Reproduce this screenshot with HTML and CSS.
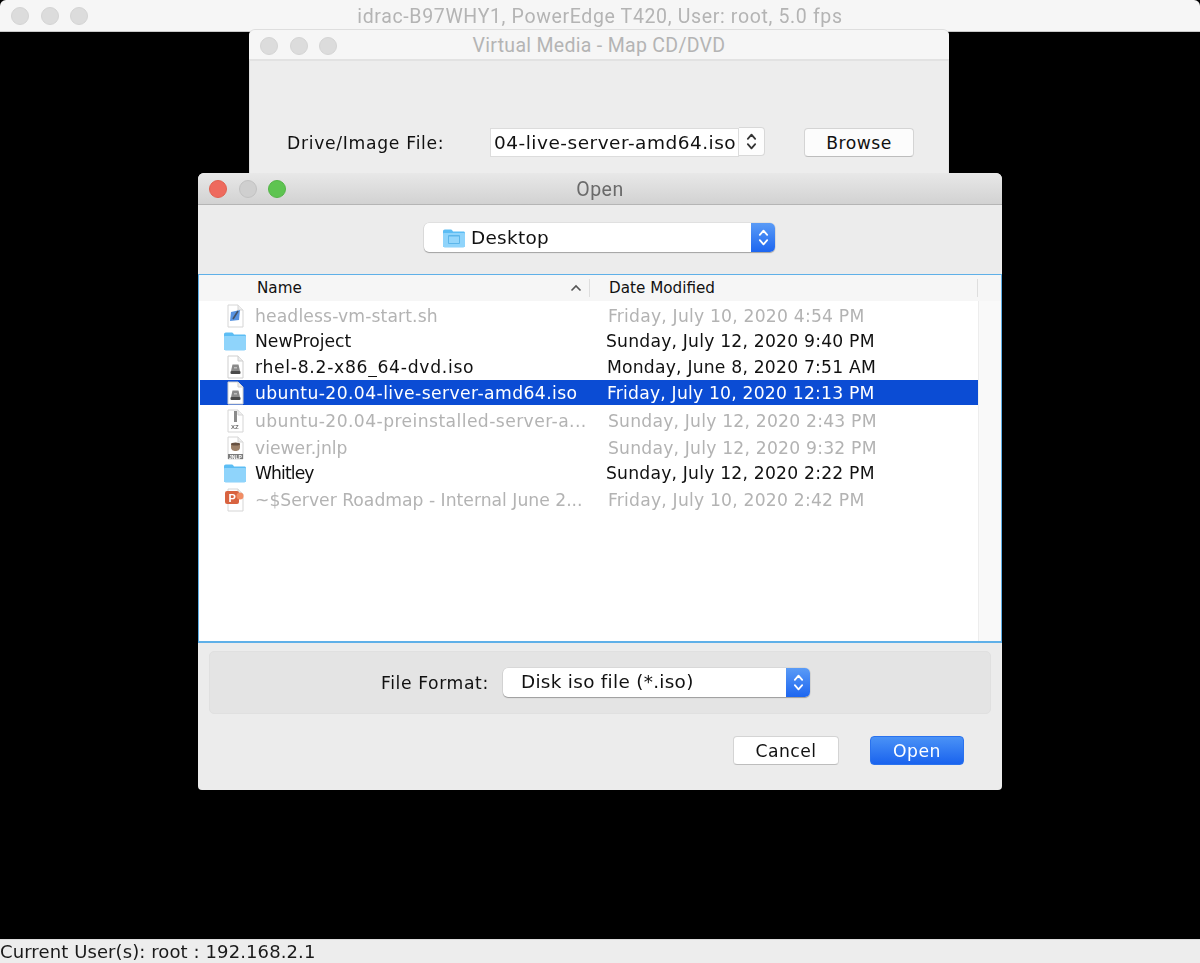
FILE: index.html
```html
<!DOCTYPE html>
<html lang="en">
<head>
<meta charset="utf-8">
<title>idrac-B97WHY1</title>
<link rel="stylesheet" href="styles.css">
</head>
<body>
<svg class="defs" width="0" height="0" aria-hidden="true">
  <defs>
    <symbol id="folder" viewBox="0 0 24 20">
      <path d="M1 3.5C1 2.4 1.7 1.5 2.8 1.5H8.6C9.4 1.5 9.9 2 10.4 2.6L11 3.4H21.4C22.4 3.4 23 4.1 23 5V17.6C23 18.6 22.4 19.3 21.4 19.3H2.6C1.6 19.3 1 18.6 1 17.6Z" fill="#5cbdf4"/>
      <path d="M1 6.2C1 5.5 1.5 5 2.2 5H21.8C22.5 5 23 5.5 23 6.2V17.6C23 18.6 22.4 19.3 21.4 19.3H2.6C1.6 19.3 1 18.6 1 17.6Z" fill="#8fd4fb"/>
    </symbol>
    <symbol id="page" viewBox="0 0 18 24">
      <path d="M2 1H12L17 6V23H2Z" fill="#fff" stroke="#cfcfcf"/>
      <path d="M12 1V6H17" fill="#ececec" stroke="#cfcfcf"/>
    </symbol>
    <symbol id="updown" viewBox="0 0 12 20">
      <path d="M2.5 7.5L6 3.5L9.500 7.5M2.500 12.500L6 16.500L9.500 12.500" fill="none" stroke="currentColor" stroke-width="1.700" stroke-linecap="round" stroke-linejoin="round"/>
    </symbol>
    <symbol id="disc" viewBox="0 0 18 24">
      <path d="M2 1H12L17 6V23H2Z" fill="#fff" stroke="#cfcfcf"/>
      <path d="M12 1V6H17" fill="#ececec" stroke="#cfcfcf"/>
      <path d="M6.500 9.500H12.500L14 16H5Z" fill="#8a8a8a"/>
      <rect x="4.500" y="16" width="10" height="3" rx="1" fill="#4a4a4a"/>
      <rect x="8" y="12" width="3" height="1.500" fill="#bdbdbd"/>
    </symbol>
  </defs>
</svg>

<main class="desktop">
  <section class="main-window">
    <header class="main-title">
      <span class="lights"><i class="light"></i><i class="light"></i><i class="light"></i></span>
      <h1 class="title-text title-pale title-wide">idrac-B97WHY1, PowerEdge T420, User: root, 5.0 fps</h1>
    </header>
    <div class="console"></div>
    <footer class="status">Current User(s): root : 192.168.2.1</footer>
  </section>

  <section class="vm-window">
    <header class="vm-title">
      <span class="lights"><i class="light"></i><i class="light"></i><i class="light"></i></span>
      <h2 class="title-text title-pale title-tight">Virtual Media - Map CD/DVD</h2>
    </header>
    <div class="vm-body">
      <label class="vm-label">Drive/Image File:</label>
      <div class="combo">
        <span class="combo-field">04-live-server-amd64.iso</span>
        <span class="combo-step"><svg class="updown"><use href="#updown"/></svg></span>
      </div>
      <button class="btn btn-browse">Browse</button>
    </div>
  </section>

  <section class="dialog">
    <header class="dialog-title">
      <span class="lights"><i class="light red"></i><i class="light grey"></i><i class="light green"></i></span>
      <h2 class="title-text title-dark">Open</h2>
    </header>
    <div class="location-row">
      <div class="popup popup-location">
        <svg class="loc-icon" viewBox="0 0 24 20">
          <use href="#folder"/>
          <rect x="6" y="7" width="12" height="9" rx="1" fill="#5cb6ea"/>
          <rect x="7" y="8.500" width="10" height="6.500" fill="#94d6fb"/>
        </svg>
        <span class="popup-text">Desktop</span>
        <span class="popup-step"><svg class="updown"><use href="#updown"/></svg></span>
      </div>
    </div>

    <div class="browser">
      <div class="list-head">
        <span class="col-name">Name</span>
        <svg class="sort" viewBox="0 0 12 8"><path d="M1.500 6.500L6 2L10.500 6.500" fill="none" stroke="#555" stroke-width="1.600"/></svg>
        <span class="col-date">Date Modified</span>
      </div>
      <div class="list-body">
        <ul class="rows">
          <li class="row off">
            <svg class="icon"><use href="#page"/><path d="M5 8L14 6L13 16L4 17Z" fill="#3a80dc"/><path d="M7 15L12 7" stroke="#24344e" stroke-width="1.600"/></svg>
            <span class="name ls-s">headless-vm-start.sh</span><span class="date">Friday, July 10, 2020 4:54 PM</span>
          </li>
          <li class="row dir">
            <svg class="icon icon-folder"><use href="#folder"/></svg>
            <span class="name name-dir">NewProject</span><span class="date date-on">Sunday, July 12, 2020 9:40 PM</span>
          </li>
          <li class="row high">
            <svg class="icon"><use href="#disc"/></svg>
            <span class="name ls-l">rhel-8.2-x86_64-dvd.iso</span><span class="date date-on">Monday, June 8, 2020 7:51 AM</span>
          </li>
          <li class="row selected">
            <svg class="icon"><use href="#disc"/></svg>
            <span class="name ls-m">ubuntu-20.04-live-server-amd64.iso</span><span class="date date-on">Friday, July 10, 2020 12:13 PM</span>
          </li>
          <li class="row off">
            <svg class="icon"><use href="#page"/><rect x="8" y="2" width="3" height="11" fill="#777"/><text class="badge" x="5" y="20">XZ</text></svg>
            <span class="name ls-m">ubuntu-20.04-preinstalled-server-a...</span><span class="date">Sunday, July 12, 2020 2:43 PM</span>
          </li>
          <li class="row off">
            <svg class="icon"><use href="#page"/><path d="M5 8H14V11C14 14 12 15 9.500 15S5 14 5 11Z" fill="#8d6c50"/><ellipse cx="9.500" cy="8" rx="4.500" ry="1.500" fill="#4d3320"/><rect x="2" y="18" width="15" height="5" fill="#666"/><text class="badge badge-light" x="3" y="22.500">JNLP</text></svg>
            <span class="name">viewer.jnlp</span><span class="date">Sunday, July 12, 2020 9:32 PM</span>
          </li>
          <li class="row dir">
            <svg class="icon icon-folder"><use href="#folder"/></svg>
            <span class="name name-dir ls-n">Whitley</span><span class="date date-on">Sunday, July 12, 2020 2:22 PM</span>
          </li>
          <li class="row off">
            <svg class="icon"><use href="#page"/><rect x="-1" y="3" width="14" height="13" rx="2" fill="#d2481f"/><circle cx="14" cy="8" r="3.500" fill="#ef7a4a"/><text class="badge badge-p" x="2.500" y="14">P</text></svg>
            <span class="name">~$Server Roadmap - Internal June 2...</span><span class="date">Friday, July 10, 2020 2:42 PM</span>
          </li>
        </ul>
        <div class="scroll-strip"></div>
      </div>
    </div>

    <div class="format-panel">
      <label class="format-label">File Format:</label>
      <div class="popup popup-format">
        <span class="popup-text">Disk iso file (*.iso)</span>
        <span class="popup-step"><svg class="updown"><use href="#updown"/></svg></span>
      </div>
    </div>

    <div class="actions">
      <button class="btn btn-cancel">Cancel</button>
      <button class="btn btn-open">Open</button>
    </div>
  </section>
</main>
</body>
</html>
```

FILE: styles.css
```css
* { box-sizing: border-box; }
html, body { margin: 0; padding: 0; height: 963px; overflow: hidden; background: #000; }
body { font-family: "DejaVu Sans", "Liberation Sans", sans-serif; color: #111; }
.defs { position: absolute; }
.desktop { position: relative; width: 1200px; height: 963px; overflow: hidden; filter: blur(.3px); }

h1, h2 { margin: 0; font-weight: 400; }
ul { list-style: none; margin: 0; padding: 0; }
button { font: inherit; color: inherit; margin: 0; }

.main-window { display: flex; flex-direction: column; height: 963px; }
.main-title { height: 32px; flex: none; display: flex; align-items: center; position: relative; background: #f6f6f6; border-bottom: 1px solid #c9c9c9; border-radius: 6px 6px 0 0; }
.console { flex: 1; background: #000; }
.status { height: 24px; flex: none; background: #ededed; border-top: 1px solid #dcdcdc; font-size: 18px; letter-spacing: .1px; line-height: 24px; white-space: nowrap; color: #1a1a1a; }

.lights { display: flex; gap: 11.500px; position: absolute; left: 11px; top: 7px; }
.light { width: 18px; height: 18px; border-radius: 50%; background: #dcdcdc; border: 1px solid #d4d4d4; display: block; }
.light.red { background: #ee6a5e; border-color: #e2604f; }
.light.grey { background: #cfcfcf; border-color: #c2c2c2; }
.light.green { background: #5ec451; border-color: #54b548; }

.title-text { width: 100%; text-align: center; font-family: "Roboto", "Liberation Sans", sans-serif; font-size: 19.500px; letter-spacing: .45px; padding-top: 1px; }
.title-pale { color: #b4b4b4; }
.title-dark { color: #6a6a6a; }
.title-wide { letter-spacing: .65px; }
.title-tight { letter-spacing: .3px; }

.vm-window { position: absolute; left: 249px; top: 29px; width: 700px; height: 150px; background: #ededed; border-radius: 6px 6px 0 0; border: 1px solid #dedede; border-bottom: 0; border-right-color: #e4e4e4; }
.vm-title { position: relative; height: 31px; margin: 0 -1px; display: flex; align-items: center; background: #f6f6f6; border-bottom: 2px solid #e2e2e2; border-radius: 6px 6px 0 0; }
.vm-body { position: relative; display: flex; align-items: flex-start; padding: 67px 0 0 37px; font-size: 17.200px; }
.vm-label { width: 203px; line-height: 30px; letter-spacing: .7px; }
.combo { display: flex; width: 275px; height: 29px; }
.combo-field { width: 249px; height: 29px; background: #fff; border: 1px solid #dcdcdc; font-size: 18.500px; letter-spacing: .5px; line-height: 28px; padding-left: 3px; white-space: nowrap; overflow: hidden; }
.combo-step { width: 26px; height: 29px; background: #fdfdfd; border: 1px solid #d8d8d8; border-left: 0; border-radius: 0 4px 4px 0; display: flex; align-items: center; justify-content: center; color: #333; margin-top: -1px; }
.updown { width: 13px; height: 21px; display: block; }

.btn { height: 29px; background: #fff; border: 1px solid #d4d4d4; border-bottom-color: #bdbdbd; border-radius: 4px; font-size: 17.200px; letter-spacing: .5px; line-height: 26px; padding: 0; }
.btn-browse { width: 110px; margin-left: 39px; background: #fcfcfc; }

.dialog { position: absolute; left: 198px; top: 173px; width: 804px; height: 617px; background: #ececec; border-radius: 6px 6px 4px 4px; display: flex; flex-direction: column; }
.dialog-title { position: relative; height: 32px; flex: none; display: flex; align-items: center; background: linear-gradient(#e8e8e8, #d2d2d2); border-bottom: 1px solid #b5b5b5; border-radius: 6px 6px 0 0; }
.location-row { height: 69px; flex: none; padding: 18px 0 0 226px; }

.popup { display: flex; align-items: center; background: #fff; border-radius: 5px; box-shadow: 0 1px 1px rgba(0,0,0,.28), 0 0 0 .5px rgba(0,0,0,.1); height: 29px; position: relative; font-size: 18.400px; }
.popup-location { width: 351px; padding-left: 18px; letter-spacing: .3px; }
.popup-format { width: 307px; padding: 0 0 2px 18px; letter-spacing: .3px; }
.loc-icon { width: 24px; height: 20px; margin-right: 5px; flex: none; }
.popup-text { white-space: nowrap; }
.popup-step { position: absolute; right: 0; top: 0; bottom: 0; width: 24px; background: linear-gradient(#5a9bf6, #1d66f0); border-radius: 0 5px 5px 0; display: flex; align-items: center; justify-content: center; color: #fff; }

.browser { height: 369px; flex: none; background: #fff; border: 1px solid #5fb0e8; border-bottom-width: 2px; display: flex; flex-direction: column; }
.list-head { height: 26px; flex: none; background: #f6f6f6; position: relative; display: flex; align-items: center; font-size: 15.200px; }
.col-name { margin-left: 58px; width: 310px; }
.sort { width: 12px; height: 8px; margin-left: 3px; }
.col-date { margin-left: 7px; padding-left: 19px; border-left: 1px solid #dedede; line-height: 18px; }
.list-head::after { content: ""; position: absolute; left: 778px; top: 4px; height: 18px; border-left: 1px solid #dedede; }

.list-body { flex: 1; display: flex; min-height: 0; }
.rows { width: 779px; padding: 1px 0 0 1px; flex: none; }
.scroll-strip { flex: 1; background: #f9f9f9; border-left: 1px solid #ededed; }

.row { height: 26.300px; display: flex; align-items: center; font-size: 17.200px; color: #111; white-space: nowrap; }
.row .icon { width: 18px; height: 24px; flex: none; margin-left: 26px; margin-right: 11px; overflow: visible; }
.row .icon-folder { width: 24px; height: 20px; margin-left: 23px; margin-right: 8px; }
.row .name { width: 352px; flex: none; overflow: hidden; }
.row .name-dir { width: 351px; }
.row .date { color: #b3b3b3; margin-left: 1px; letter-spacing: .2px; }
.row .date-on { color: #111; margin-left: 0; letter-spacing: .2px; }
.row.off { padding-top: 2px; }
.row.off .name { color: #b3b3b3; }
.row.off .icon { opacity: .85; }
.row.high { padding-bottom: 2px; }
.row.selected { height: 25px; margin: -.5px 0 1.800px; background: #0b4cd4; color: #fff; }
.row.selected .date { color: #fff; }
.ls-s { letter-spacing: .12px; }
.ls-m { letter-spacing: .41px; }
.ls-l { letter-spacing: .7px; }
.ls-n { letter-spacing: -.9px; }
.badge { font-family: "Liberation Sans", sans-serif; font-size: 6px; fill: #555; font-weight: 700; }
.badge-light { fill: #fff; font-size: 5px; }
.badge-p { fill: #fff; font-size: 11px; }

.format-panel { margin: 8px 11px 0; height: 63px; flex: none; background: #e4e4e4; border: 1px solid #e0e0e0; border-radius: 5px; display: flex; align-items: center; font-size: 17.200px; padding-left: 171px; }
.format-label { width: 122px; letter-spacing: .6px; }

.actions { display: flex; padding: 22px 38px 0 535px; gap: 31px; }
.actions .btn { line-height: 24px; }
.btn-cancel { width: 106px; }
.btn-open { width: 94px; background: linear-gradient(#4a92f6, #1a63ee); border-color: #2a72ee; color: #fff; }
```
